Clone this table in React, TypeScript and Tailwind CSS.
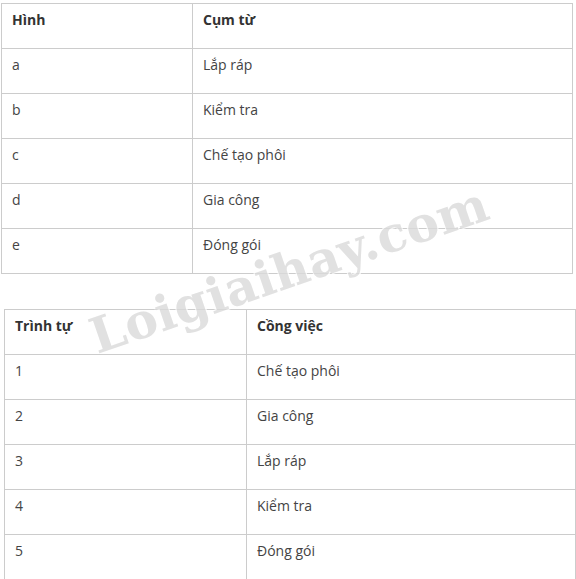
import React from 'react';

const table1 = [
  ['a', 'Lắp ráp'],
  ['b', 'Kiểm tra'],
  ['c', 'Chế tạo phôi'],
  ['d', 'Gia công'],
  ['e', 'Đóng gói'],
];

const table2 = [
  ['1', 'Chế tạo phôi'],
  ['2', 'Gia công'],
  ['3', 'Lắp ráp'],
  ['4', 'Kiểm tra'],
  ['5', 'Đóng gói'],
];

function DataTable({ head, rows, firstCol }: { head: string[]; rows: string[][]; firstCol: string }) {
  const cell = 'border border-[#cccccc] h-[45px] align-top px-[10px] pt-[6px] text-[14px] leading-[20px]';
  return (
    <table className="w-[572px] border-collapse table-fixed">
      <colgroup>
        <col className={firstCol} />
        <col />
      </colgroup>
      <thead>
        <tr>
          {head.map((h) => (
            <th key={h} className={`${cell} text-left font-bold text-[#333333]`}>
              {h}
            </th>
          ))}
        </tr>
      </thead>
      <tbody>
        {rows.map((r) => (
          <tr key={r[0]}>
            {r.map((c, i) => (
              <td key={i} className={`${cell} text-[#444444]`}>
                {c}
              </td>
            ))}
          </tr>
        ))}
      </tbody>
    </table>
  );
}

export default function App() {
  return (
    <div className="relative w-[576px] h-[579px] overflow-hidden bg-white font-['Open_Sans',sans-serif]">
      <div className="ml-[1px] mt-[3px]">
        <DataTable head={['Hình', 'Cụm từ']} rows={table1} firstCol="w-[191px]" />
      </div>
      <div className="ml-[4px] mt-[35px]">
        <DataTable head={['Trình tự', 'Cồng việc']} rows={table2} firstCol="w-[242px]" />
      </div>

      {/* watermark */}
      <div className="pointer-events-none absolute left-[92px] top-[314px] origin-left -rotate-[19deg] whitespace-nowrap font-['DejaVu_Serif',serif] text-[49px] font-bold leading-none tracking-[0.5px] text-[#dadada] opacity-80 [text-shadow:1px_1px_0_#ffffff,-1px_-1px_0_#ffffff]">
        Loigiaihay.com
      </div>
    </div>
  );
}
